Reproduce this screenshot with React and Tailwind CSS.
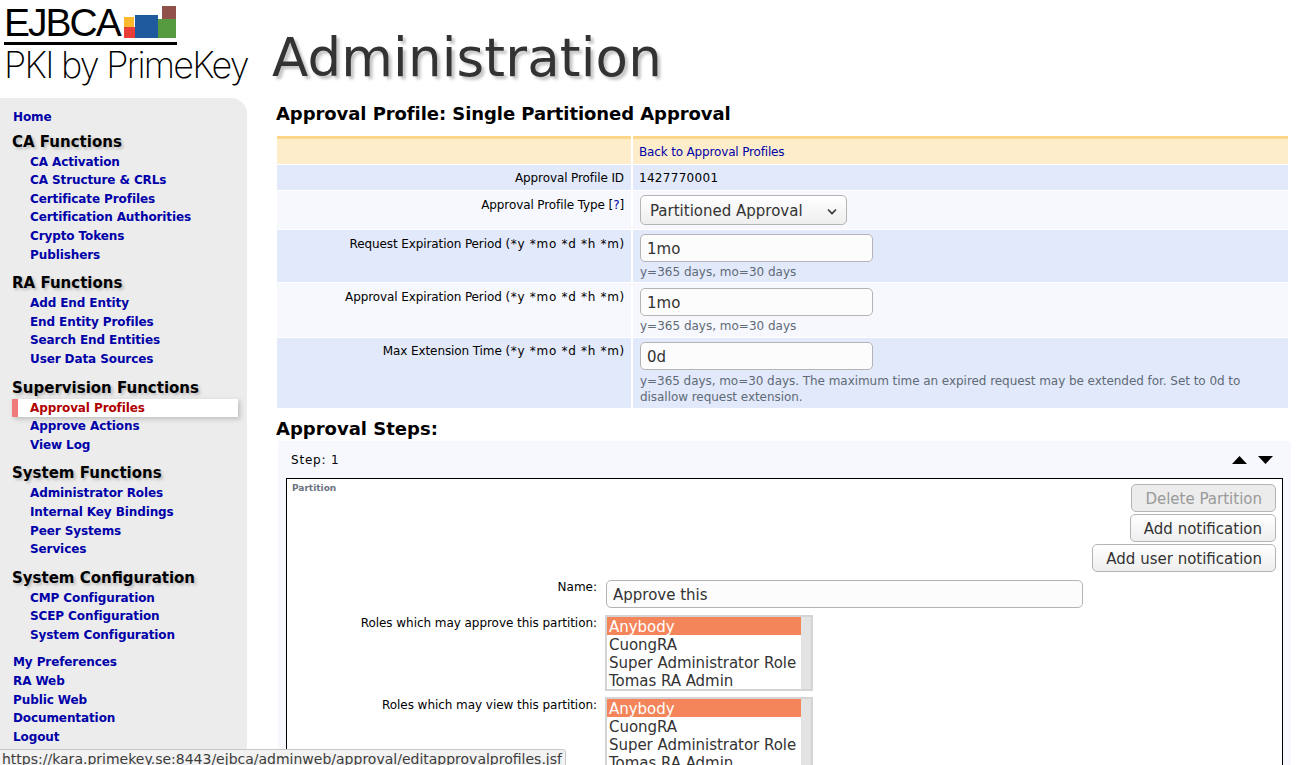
import React from 'react';

const groups = [
  { title: 'CA Functions', links: ['CA Activation', 'CA Structure & CRLs', 'Certificate Profiles', 'Certification Authorities', 'Crypto Tokens', 'Publishers'] },
  { title: 'RA Functions', links: ['Add End Entity', 'End Entity Profiles', 'Search End Entities', 'User Data Sources'] },
  { title: 'Supervision Functions', links: ['Approval Profiles', 'Approve Actions', 'View Log'] },
  { title: 'System Functions', links: ['Administrator Roles', 'Internal Key Bindings', 'Peer Systems', 'Services'] },
  { title: 'System Configuration', links: ['CMP Configuration', 'SCEP Configuration', 'System Configuration'] },
];

const bottomLinks = ['My Preferences', 'RA Web', 'Public Web', 'Documentation', 'Logout'];
const roles = ['Anybody', 'CuongRA', 'Super Administrator Role', 'Tomas RA Admin'];

const Logo = () => (
  <div className="w-[272px] shrink-0 pl-[4px] pt-[1px]">
    <div className="flex h-[41px] w-[173px] items-end justify-between">
      <span className="font-['Liberation_Sans',sans-serif] text-[39px] leading-[38px] tracking-[-2px] text-black">EJBCA</span>
      <svg width="53" height="33" viewBox="0 0 53 33" className="mb-[3px]">
        <rect x="0" y="11" width="10" height="11" fill="#fdb92e" />
        <rect x="0" y="21" width="11" height="11" fill="#ea3e3a" />
        <rect x="11" y="9" width="23" height="23" fill="#1f5a9e" />
        <rect x="34" y="13" width="18" height="19" fill="#559a3f" />
        <rect x="38" y="0" width="14" height="13" fill="#8f5149" />
      </svg>
    </div>
    <div className="h-[3px] w-[173px] bg-black" />
    <div className="mt-[1px] font-['Inter',sans-serif] text-[36px] font-extralight leading-[38px] tracking-[-1.75px] whitespace-nowrap text-black">
      PKI by PrimeKey
    </div>
  </div>
);

const Sidebar = () => (
  <nav className="h-[667px] w-[247px] shrink-0 overflow-hidden rounded-tr-[16px] bg-[#ececec] pt-[10px] text-[12px] leading-[18.6px] font-bold tracking-[-0.1px] text-[#0000a8]">
    <a className="block pl-[13px]">Home</a>
    {groups.map((group) => (
      <div key={group.title} className="pt-[4px] pb-[4px]">
        <h2 className="pl-[12px] text-[15px] leading-[22px] font-bold tracking-normal text-black [text-shadow:2px_2px_3px_#b8b8b8]">{group.title}</h2>
        {group.links.map((link) =>
          link === 'Approval Profiles' ? (
            <a key={link} className="ml-[12px] block h-[18.6px] w-[226px] border-l-[6px] border-[#f07a7a] bg-white pl-[12px] text-[#b00000] shadow-[2px_2px_5px_#bbbbbb]">{link}</a>
          ) : (
            <a key={link} className="block pl-[30px]">{link}</a>
          )
        )}
      </div>
    ))}
    <div className="pt-[5px] pl-[13px]">
      {bottomLinks.map((link) => (
        <a key={link} className="block">{link}</a>
      ))}
    </div>
  </nav>
);

const Row = ({ label, tone, height, children }) => (
  <div className={`grid grid-cols-[354px_655px] gap-x-[2px] ${height}`}>
    <div className={`pr-[7px] text-right tracking-[-0.1px] ${tone}`}>{label}</div>
    <div className={`pl-[7px] ${tone}`}>{children}</div>
  </div>
);

const Period = () => <span className="-mr-[1px] tracking-[0.7px]">(*y *mo *d *h *m)</span>;

const Field = ({ value, width }) => (
  <input
    readOnly
    value={value}
    className={`${width} block h-[28px] rounded-[5px] border border-[#b4b4b4] bg-[#fcfcfc] px-[6px] pt-[2px] text-[15px] text-[#333] outline-none`}
  />
);

const Btn = ({ children, disabled }) => (
  <button className={`h-[28px] rounded-[5px] border border-[#b4b4b4] px-[13px] pt-[2px] text-[15px] leading-none ${disabled ? 'bg-[#ececec] text-[#9a9a9a]' : 'bg-gradient-to-b from-white to-[#eeeeee] text-[#333]'}`}>
    {children}
  </button>
);

const RoleList = ({ label, className }) => (
  <div className={`grid grid-cols-[305px_auto] gap-x-[8px] ${className}`}>
    <div className="pt-[1px] text-right leading-[15px] tracking-[-0.05px] text-black">{label}</div>
    <div className="flex h-[76px] w-[208px] border-2 border-[#d4d4d4] bg-white text-[15px] leading-[18px] tracking-[-0.04px] whitespace-nowrap text-[#333]">
      <div className="flex-1">
        {roles.map((role, i) => (
          <div key={role} className={i === 0 ? 'h-[18px] bg-[#f4845a] pt-[1px] pl-[2px] text-white' : 'h-[18px] pt-[1px] pl-[2px]'}>{role}</div>
        ))}
      </div>
      <div className="w-[10px] bg-[#e3e3e3]" />
    </div>
  </div>
);

const App = () => {
  return (
    <div className="relative h-[765px] w-[1308px] overflow-hidden bg-white font-['DejaVu_Sans',sans-serif] text-[12px] text-black">
      <header className="flex h-[98px]">
        <Logo />
        <h1 className="pt-[22px] text-[53px] leading-[72px] font-normal tracking-[0.15px] text-[#333] [text-shadow:3px_3px_3px_#c4c4c4]">Administration</h1>
      </header>
      <div className="flex">
        <Sidebar />
        <main className="ml-[29px] w-[1015px]">
          <h2 className="mt-[4px] text-[18px] leading-[24px] font-bold tracking-[-0.07px]">Approval Profile: Single Partitioned Approval</h2>
          <div className="mt-[10px] ml-[1px] flex flex-col gap-y-[1px] leading-[15px]">
            <div className="grid h-[28px] grid-cols-[354px_655px] gap-x-[2px]">
              <div className="border-t-[3px] border-[#fdd68a] bg-[#feedcb]" />
              <div className="border-t-[3px] border-[#fdd68a] bg-[#feedcb] pt-[6px] pl-[6px] tracking-[-0.16px] text-[#0000a8]">Back to Approval Profiles</div>
            </div>
            <Row label={<span className="block pt-[6px]">Approval Profile ID</span>} tone="bg-[#e2e9fb]" height="h-[25px]">
              <span className="-ml-[1px] block pt-[6px] tracking-[0.3px]">1427770001</span>
            </Row>
            <Row label={<span className="block pt-[7px]">Approval Profile Type [<span className="text-[#0000a8]">?</span>]</span>} tone="bg-[#f6f8fd]" height="h-[38px]">
              <div className="pt-[4px]">
                <div className="flex h-[30px] w-[207px] items-center justify-between rounded-[5px] border border-[#b4b4b4] bg-gradient-to-b from-white to-[#eeeeee] pt-[2px] pr-[9px] pl-[9px] text-[15px] text-[#333]">
                  Partitioned Approval
                  <svg width="10" height="7" viewBox="0 0 10 7"><path d="M1 1.5 5 5.5 9 1.5" fill="none" stroke="#333" strokeWidth="1.6" /></svg>
                </div>
              </div>
            </Row>
            <Row label={<span className="block pt-[7px]">Request Expiration Period <Period /></span>} tone="bg-[#e2e9fb]" height="h-[52px]">
              <div className="pt-[4px]">
                <Field value="1mo" width="w-[233px]" />
                <div className="mt-[3px] text-[#5f6b76]">y=365 days, mo=30 days</div>
              </div>
            </Row>
            <Row label={<span className="block pt-[7px]">Approval Expiration Period <Period /></span>} tone="bg-[#f6f8fd]" height="h-[54px]">
              <div className="pt-[5px]">
                <Field value="1mo" width="w-[233px]" />
                <div className="mt-[3px] text-[#5f6b76]">y=365 days, mo=30 days</div>
              </div>
            </Row>
            <Row label={<span className="block pt-[6px]">Max Extension Time <Period /></span>} tone="bg-[#e2e9fb]" height="h-[70px]">
              <div className="pt-[4px]">
                <Field value="0d" width="w-[233px]" />
                <div className="mt-[3px] leading-[16px] tracking-[-0.05px] text-[#5f6b76]">y=365 days, mo=30 days. The maximum time an expired request may be extended for. Set to 0d to disallow request extension.</div>
              </div>
            </Row>
          </div>
          <h2 className="mt-[9px] text-[18px] leading-[24px] font-bold">Approval Steps:</h2>
          <section className="ml-[2px] w-[1013px] bg-[#f6f8fd] px-[8px] pt-[10px]">
            <div className="flex h-[27px] items-start justify-between pr-[10px] pl-[5px]">
              <span className="pt-[1px] leading-[17px] tracking-[0.8px]">Step: 1</span>
              <div className="flex gap-x-[11px] pt-[5px]">
                <svg width="15" height="8" viewBox="0 0 15 8"><path d="M7.5 0 15 8H0Z" fill="#000" /></svg>
                <svg width="15" height="8" viewBox="0 0 15 8"><path d="M0 0H15L7.5 8Z" fill="#000" /></svg>
              </div>
            </div>
            <div className="h-[320px] w-[997px] border border-black bg-white pt-[5px] pr-[6px] pl-[5px]">
              <div className="flex items-start justify-between">
                <span className="text-[9px] leading-[9px] font-bold text-[#6b7280]">Partition</span>
                <div className="flex flex-col items-end gap-y-[2px]">
                  <Btn disabled>Delete Partition</Btn>
                  <Btn>Add notification</Btn>
                  <Btn>Add user notification</Btn>
                </div>
              </div>
              <div className="mt-[8px] grid grid-cols-[305px_auto] gap-x-[9px] pb-[7px]">
                <div className="text-right leading-[14px]">Name:</div>
                <Field value="Approve this" width="w-[477px]" />
              </div>
              <RoleList label="Roles which may approve this partition:" className="mb-[6px]" />
              <RoleList label="Roles which may view this partition:" />
            </div>
          </section>
        </main>
      </div>
      <div className="absolute bottom-0 left-0 h-[16px] w-[566px] overflow-hidden rounded-tr-[4px] border-t border-r border-[#c8c8c8] bg-[#f2f2f2] pl-[2px] text-[14px] leading-[18px] whitespace-nowrap text-[#3c3c3c]">
        https://kara.primekey.se:8443/ejbca/adminweb/approval/editapprovalprofiles.jsf
      </div>
    </div>
  );
};

export default App;
